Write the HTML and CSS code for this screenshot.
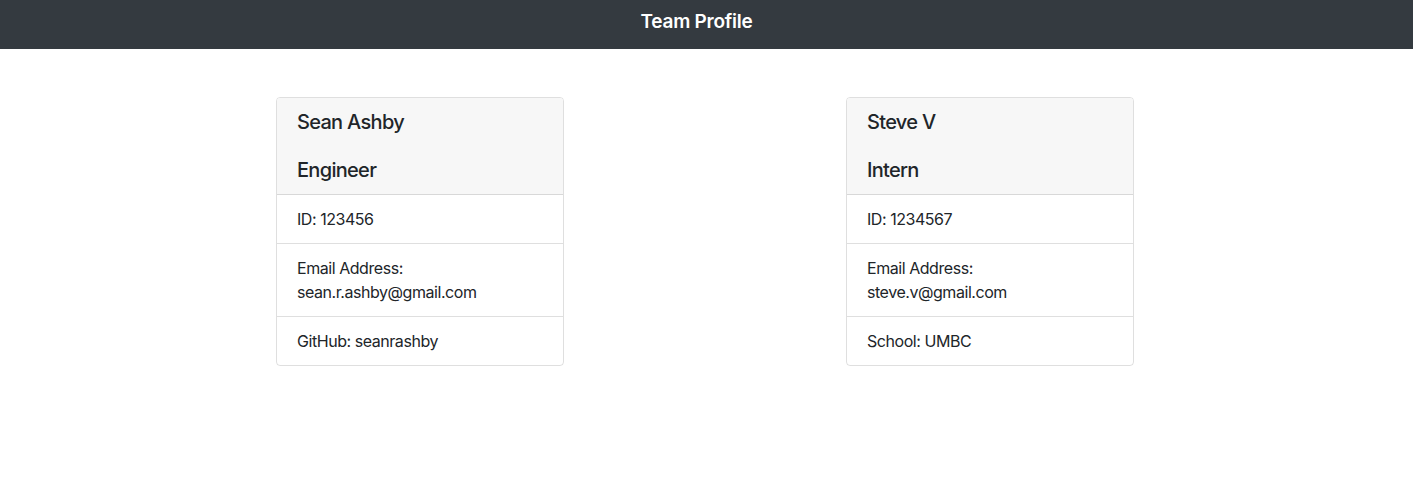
FILE: index.html
```html
<!DOCTYPE html>
<html lang="en">
<head>
<meta charset="utf-8">
<title>Team Profile</title>
<link rel="stylesheet" href="styles.css">
</head>
<body>
<header class="topbar">
  <h1 class="topbar-title">Team Profile</h1>
</header>
<main class="cards">
  <section class="card">
    <div class="card-header">
      <h5 class="card-name">Sean Ashby</h5>
      <h5 class="card-role">Engineer</h5>
    </div>
    <ul class="card-list">
      <li class="card-item">ID: 123456</li>
      <li class="card-item">Email Address:<br>sean.r.ashby@gmail.com</li>
      <li class="card-item">GitHub: seanrashby</li>
    </ul>
  </section>
  <section class="card">
    <div class="card-header">
      <h5 class="card-name">Steve V</h5>
      <h5 class="card-role">Intern</h5>
    </div>
    <ul class="card-list">
      <li class="card-item">ID: 1234567</li>
      <li class="card-item">Email Address:<br>steve.v@gmail.com</li>
      <li class="card-item">School: UMBC</li>
    </ul>
  </section>
</main>
</body>
</html>
```
FILE: styles.css
```css
* { box-sizing: border-box; }
body {
  margin: 0;
  font-family: Inter, "Liberation Sans", sans-serif;
  color: #212529;
  background: #fff;
  font-size: 16px;
  line-height: 1.5;
  letter-spacing: -0.45px;
}
.topbar {
  background: #343a40;
  height: 49px;
  padding: 8px 20px 0 0;
  text-align: center;
}
.topbar-title {
  margin: 0;
  color: #fff;
  font-size: 19px;
  font-weight: 600;
  line-height: 28px;
  letter-spacing: -0.25px;
}
.cards {
  display: flex;
  gap: 282px;
  padding: 48px 0 0 276px;
}
.card {
  width: 288px;
  border: 1px solid rgba(0,0,0,0.125);
  border-radius: 4px;
  overflow: hidden;
}
.card-header {
  background: #f7f7f7;
  padding: 12px 20px;
  border-bottom: 1px solid rgba(0,0,0,0.125);
}
.card-name, .card-role {
  margin: 0;
  font-size: 20px;
  font-weight: 500;
  line-height: 24px;
  letter-spacing: -0.7px;
}
.card-name { margin-bottom: 24px; }
.card-list {
  list-style: none;
  margin: 0;
  padding: 0;
}
.card-item {
  padding: 12px 20px;
  border-bottom: 1px solid rgba(0,0,0,0.125);
}
.card-item:last-child { border-bottom: none; }
```
